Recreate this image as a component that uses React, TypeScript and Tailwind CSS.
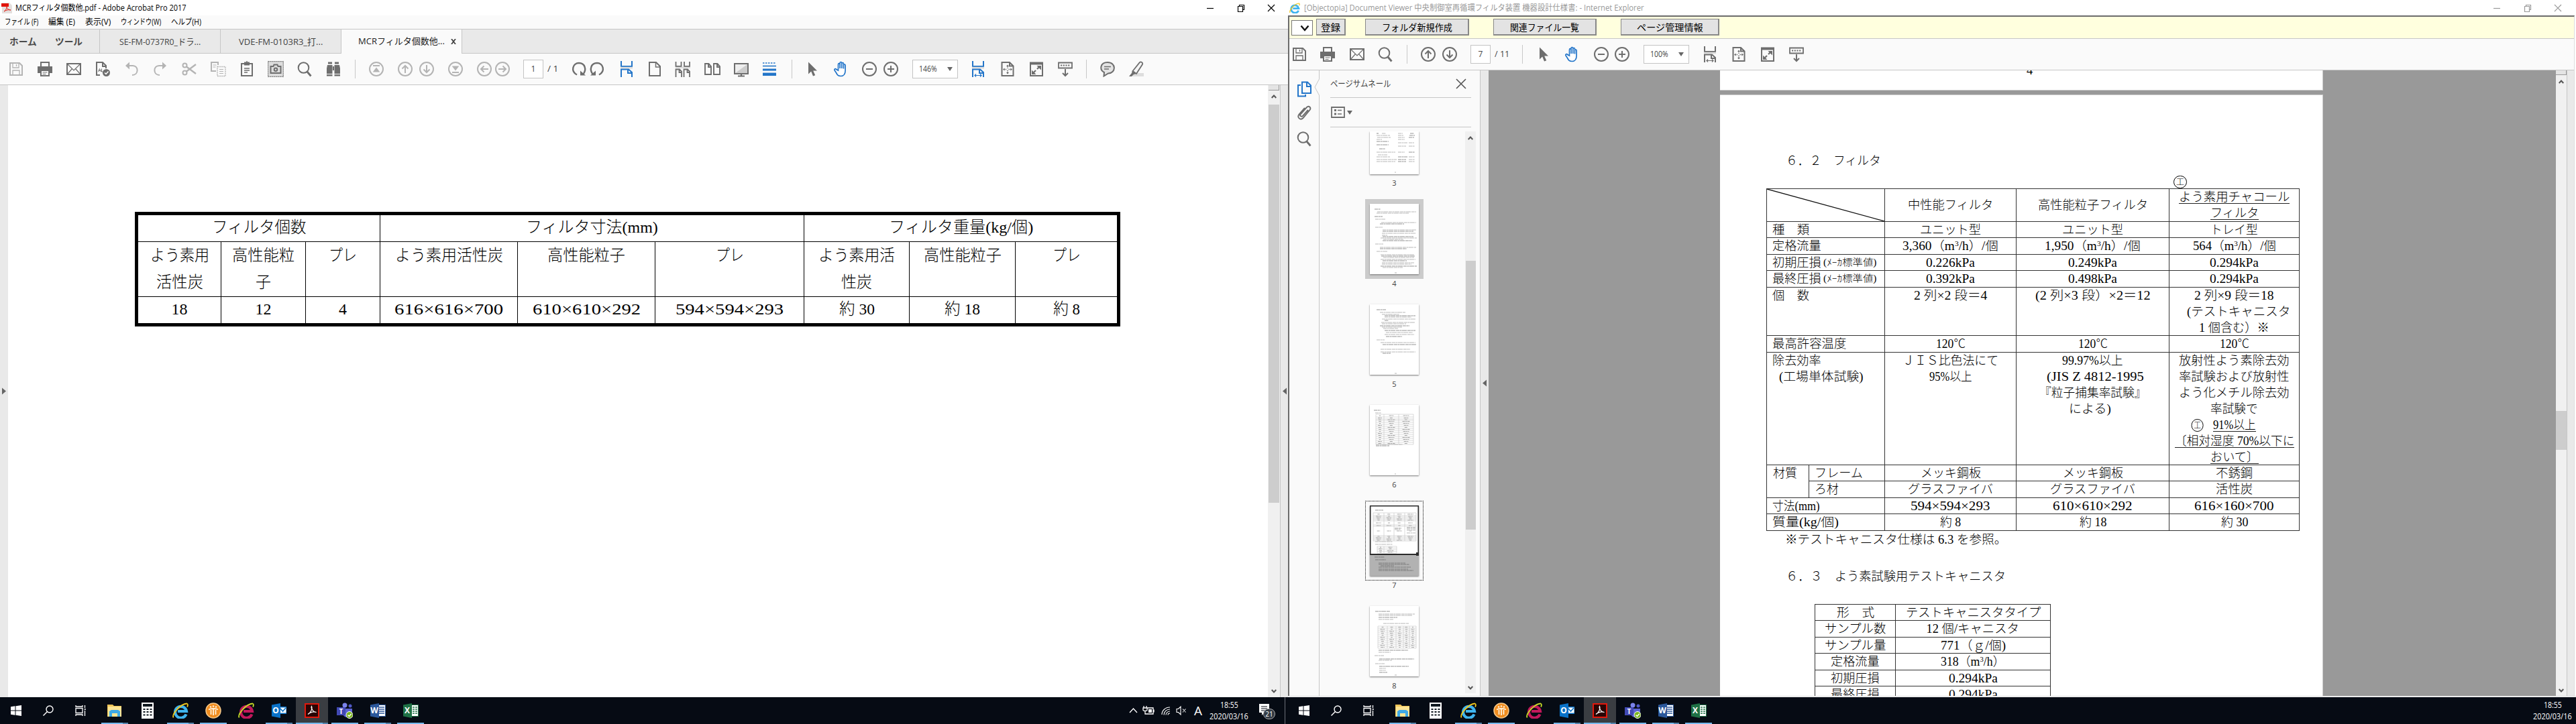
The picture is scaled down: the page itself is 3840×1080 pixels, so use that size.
import React, { useLayoutEffect, useRef, useState } from "react";

const UI = "font-['Open_Sans','Noto_Sans_CJK_JP',sans-serif]";
const DOC = "font-['Liberation_Serif','Noto_Sans_CJK_JP',serif] font-light";

/* Latin runs keep the regular weight while Japanese inherits the surrounding one. */
function mix(node: React.ReactNode): React.ReactNode {
  if (typeof node === "string") {
    return node.split(/([\x20-\x7e×]+)/).map((t, i) => (i % 2 ? <span key={i} className="font-normal">{t}</span> : t));
  }
  if (Array.isArray(node)) return node.map((n, i) => <React.Fragment key={i}>{mix(n)}</React.Fragment>);
  if (React.isValidElement<{ children?: React.ReactNode }>(node) && node.props.children) {
    return React.cloneElement(node, {}, mix(node.props.children));
  }
  return node;
}

/* Text condensed or widened to an exact pixel width. */
function Fit({ w, children, className = "" }: { w: number; children: React.ReactNode; className?: string }) {
  const ref = useRef<HTMLSpanElement>(null);
  const [s, setS] = useState(1);
  useLayoutEffect(() => {
    if (ref.current && ref.current.offsetWidth) setS(w / ref.current.offsetWidth);
  }, [w]);
  return (
    <span className={`block shrink-0 whitespace-nowrap ${className}`} style={{ width: w }}>
      <span ref={ref} className="inline-block origin-left whitespace-pre" style={{ transform: `scaleX(${s})` }}>
        {mix(children)}
      </span>
    </span>
  );
}

const G = "#6e6e6e";
const L = "#b4b4b4";
const B = "#2375c9";

type IP = { c?: string; className?: string };
function Svg({ children, c = G, className = "" }: IP & { children: React.ReactNode }) {
  return (
    <svg viewBox="0 0 24 24" fill="none" stroke={c} strokeWidth="2" className={`block h-6 w-6 shrink-0 ${className}`}>
      {children}
    </svg>
  );
}

const Save = (p: IP) => (
  <Svg {...p}>
    <path d="M3 3h14l4 4v14H3z" />
    <path d="M7 3v7h9V3M12.5 5v3M7 21v-7h10v7" strokeWidth="1.3" />
  </Svg>
);
const Print = (p: IP) => (
  <Svg {...p}>
    <path d="M6 8V2h12v6" />
    <path d="M1 8h22v10h-4v-4H5v4H1z" fill={p.c || G} stroke="none" />
    <path d="M6 14h12v8H6z" fill="#fff" />
    <path d="M8.5 17h7M8.5 19.5h5" strokeWidth="1.2" />
  </Svg>
);
const Mail = (p: IP) => (
  <Svg {...p}>
    <path d="M2 4h20v16H2z" />
    <path d="M2 4l10 10L22 4M2 20l7.5-8.500M22 20l-7.500-8.500" strokeWidth="1.2" />
  </Svg>
);
const Spell = (p: IP) => (
  <Svg {...p}>
    <path d="M8 21H3V2h9l5 5v4M12 2v6h5" />
    <path d="M5.500 16l2-4.500 2 4.500M6.300 14.500h2.500M10.500 11.500v4.500h2" strokeWidth="1" />
    <circle cx="17.500" cy="17.500" r="5.500" fill={G} stroke="none" />
    <path d="M15 17.500l2 2 3.500-4" stroke="#fff" strokeWidth="1.500" />
  </Svg>
);
const Undo = (p: IP) => (
  <Svg {...p}>
    <path d="M4 7h10c9 0 9 14-1 14" />
    <path d="M9 1.500v11L3 7z" fill={L} stroke="none" />
  </Svg>
);
const Redo = (p: IP) => (
  <Svg {...p}>
    <path d="M20 7H10c-9 0-9 14 1 14" />
    <path d="M15 1.500v11L21 7z" fill={L} stroke="none" />
  </Svg>
);
const Cut = (p: IP) => (
  <Svg {...p}>
    <circle cx="5.500" cy="6.500" r="3" />
    <circle cx="5.500" cy="17.500" r="3" />
    <path d="M8 8.500L22 19M8 15.500L22 5" strokeWidth="2.400" />
  </Svg>
);
const Copy = (p: IP) => (
  <Svg {...p}>
    <path d="M9 15H2V2h10v4" />
    <path d="M4.500 6h5M4.500 9h4" strokeWidth="1.200" />
    <path d="M11 8.500h12v14H11z" strokeWidth="1.400" strokeDasharray="2 1" />
    <path d="M14 12.500h6M14 15.500h6M14 18.500h6" strokeWidth="1.200" />
  </Svg>
);
const Paste = (p: IP) => (
  <Svg {...p}>
    <path d="M4 4h16v18H4z" />
    <path d="M8 1.500h8v5H8z" fill={G} stroke="none" />
    <path d="M12 0v3M8 11h8M8 14h8M8 17h5" strokeWidth="1.400" />
  </Svg>
);
const Camera = (p: IP) => (
  <Svg {...p}>
    <path d="M.700.700h22.600v22.600H.700z" fill="#ddd" strokeWidth="1.200" strokeDasharray="2 1" />
    <path d="M4.500 8h4l1-2.500h5l1 2.500h4v10h-15z" />
    <circle cx="12" cy="12.800" r="2.300" />
  </Svg>
);
const Search = (p: IP) => (
  <Svg {...p}>
    <circle cx="10.500" cy="10" r="7.800" />
    <path d="M15.500 15.500l6 7" strokeWidth="2.800" />
  </Svg>
);
const Binoc = (p: IP) => (
  <Svg {...p}>
    <path d="M4 1.500h6v3H4zM14 1.500h6v3h-6zM3 6h7.500v13H2v-8zM21 6h-7.500v13H22v-8zM2 20h8.500v2.500H2zM13.500 20H22v2.500h-8.500zM11 8h2v6h-2z" fill={G} stroke="none" />
  </Svg>
);
const Circ = ({ d, ...p }: IP & { d: string }) => (
  <Svg {...p}>
    <circle cx="12" cy="12" r="10" />
    <path d={d} strokeWidth="2" />
  </Svg>
);
const SolidCirc = ({ d, ...p }: IP & { d: string }) => (
  <Svg {...p}>
    <circle cx="12" cy="12" r="10" />
    <path d={d} strokeWidth="1.800" fill={p.c || G} />
  </Svg>
);
const UP = "M12 18V7M7.500 11.500L12 7l4.500 4.500";
const DOWN = "M12 6v11M7.500 12.500L12 17l4.500-4.500";
const LEFT = "M18 12H7M11.500 7.500L7 12l4.500 4.500";
const RIGHT = "M6 12h11M12.500 7.500L17 12l-4.500 4.500";
const FIRST = "M7 7h10M12 11l-3.500 4.500h7z";
const LAST = "M7 17h10M12 13L8.500 8.500h7z";
const Cw = (p: IP) => (
  <Svg {...p}>
    <path d="M9 20.500C-1 15 3 3 12 3s12 10 6 17" strokeWidth="2.400" />
    <path d="M14 14.500v7h8z" fill={G} stroke="none" />
  </Svg>
);
const Ccw = (p: IP) => (
  <Svg {...p}>
    <path d="M15 20.500C25 15 21 3 12 3S0 13 6 20" strokeWidth="2.400" />
    <path d="M10 14.500v7H2z" fill={G} stroke="none" />
  </Svg>
);
const Scroll = (p: IP) => (
  <Svg {...p}>
    <path d="M4 0v8h16V0" />
    <path d="M3 8.500h18v3H3z" fill="#ccc" fillOpacity=".6" stroke="none" />
    <path d="M4 24V12.500h11l5 4.500V24M14 12.500V18h6" />
  </Svg>
);
const FitW = (p: IP) => (
  <Svg {...p}>
    <path d="M4 0v8h16V0" />
    <path d="M3 8.500h18v3H3z" fill="#ccc" fillOpacity=".6" stroke="none" />
    <path d="M4 24V12.500h11l5 4.500V24M14 12.500V18h6" />
    <path d="M7 21.500h10M9 19.500l-2 2 2 2M15 19.500l2 2-2 2" strokeWidth="1.200" />
  </Svg>
);
const PageI = (p: IP) => (
  <Svg {...p}>
    <path d="M4 2h10l6 6v14H4z" />
    <path d="M13.500 2v7H20" strokeWidth="1.500" />
  </Svg>
);
const Four = (p: IP) => (
  <Svg {...p}>
    <path d="M1.500 1v7h8V1M14 1v7h8V1M1.500 24V12.500H7l3 3V24M13.500 24V12.500H19l3 3V24M6.500 12.500V17h3M18.500 12.500V17h3" strokeWidth="1.800" />
    <path d="M1 8.500h22v2.500H1z" fill="#ccc" fillOpacity=".6" stroke="none" />
  </Svg>
);
const Two = (p: IP) => (
  <Svg {...p}>
    <path d="M1 4h5.500L10 8v12H1zM14 4h5.500L23 8v12h-9zM6 4v5h4M19 4v5h4" strokeWidth="1.900" />
  </Svg>
);
const Monitor = (p: IP) => (
  <Svg {...p}>
    <path d="M2 4h20v15H2z" fill="#eee" />
    <path d="M3 18L21 5v13z" fill="#ccc" stroke="none" />
    <path d="M7 22.500h10M12 19v3" strokeWidth="2.200" />
  </Svg>
);
const Lines = (p: IP) => (
  <Svg {...p}>
    <path d="M2 3h20" strokeWidth="1.300" strokeDasharray="2.500 1.500" />
    <path d="M2 7.500h20" strokeWidth="1.600" />
    <path d="M2 13h20" strokeWidth="3" />
    <path d="M2 19.800h20" strokeWidth="4.500" />
  </Svg>
);
const Cursor = (p: IP) => (
  <Svg {...p}>
    <path d="M6 1.500v18l4.200-4 2.800 7 3.200-1.300-3-6.700H19z" fill={G} stroke="none" />
  </Svg>
);
const Hand = (p: IP) => (
  <Svg {...p}>
    <path d="M7.500 14V5.200c0-2 2.600-2 2.600 0V11 3c0-2 2.700-2 2.700 0v8V4c0-2 2.700-2 2.700 0v7.500V6.500c0-2 2.600-2 2.600 0V14c0 5-2 8.500-6.600 8.500-4.500 0-5.500-2-7-5L2 13.800c-.800-2 1.500-3 2.700-1.300z" fill="#fff" strokeWidth="1.700" />
  </Svg>
);
const FitPage = (p: IP) => (
  <Svg {...p}>
    <path d="M3.500 2H15l5.500 5.500V22h-17zM15 2v5.500h5.500" />
    <path d="M12 7.500v4M12 13.500v5M6.500 12.500h4M13.500 12.500h4" strokeWidth="1.400" strokeDasharray="1.400 .800" />
    <path d="M12 5.500l2 2.500h-4zM12 19.500l2-2.500h-4zM5 12.500l2.500-2v4zM19 12.500l-2.500-2v4z" fill={G} stroke="none" />
  </Svg>
);
const Full = (p: IP) => (
  <Svg {...p}>
    <path d="M3 3h18v19H3z" />
    <path d="M2 1.500h20v4H2z" fill={G} stroke="none" />
    <path d="M12.500 7H19v6.500zM5 13.500V20h6.500z" fill={G} stroke="none" />
    <path d="M13 12l4-4M7 18l4-4" strokeWidth="2.200" />
  </Svg>
);
const ReadMode = (p: IP) => (
  <Svg {...p}>
    <path d="M2 2.500h20v8H2z" strokeWidth="1.800" />
    <path d="M5 6.500h14" strokeWidth="2" strokeDasharray="2.200 1.500" />
    <path d="M12 12v10M8 18l4 4 4-4" strokeWidth="2" />
  </Svg>
);
const Comment = (p: IP) => (
  <Svg {...p}>
    <path d="M12 2c13 0 13 16 1 16.500L6.500 22.500l.500-5.500C-.500 13 1 2 12 2z" fill="#e4e4e4" />
    <path d="M7 8.500h10M7 12h7" strokeWidth="1.600" />
  </Svg>
);
const Marker = (p: IP) => (
  <Svg {...p}>
    <path d="M9 18h14v5H6z" fill="#ddd" stroke="none" />
    <path d="M6.500 15L17 2c2-1.500 5 .500 4 3L12 19z" fill="#f5f5f5" strokeWidth="1.800" />
    <path d="M6 14.500l6 4.500-4 1-3 3H1l4-5z" fill={G} stroke="none" />
  </Svg>
);
const Tri = ({ className = "" }: { className?: string }) => (
  <svg viewBox="0 0 8 6" className={`block h-1.5 w-2 shrink-0 ${className}`}><path d="M0 0h8L4 6z" fill="#666" /></svg>
);
const SideTri = ({ right }: { right?: boolean }) => (
  <svg viewBox="0 0 6 10" className="block h-[11px] w-1.5"><path d={right ? "M0 0l6 5-6 5z" : "M6 0L0 5l6 5z"} fill="#666" /></svg>
);
const Chev = ({ up }: { up?: boolean }) => (
  <svg viewBox="0 0 8 6" className="block h-1.5 w-2" fill="none" stroke="#555" strokeWidth="2"><path d={up ? "M.700 5L4 1.500 7.300 5" : "M.700 1L4 4.500 7.300 1"} /></svg>
);
const Sep = ({ className = "" }: { className?: string }) => <div className={`h-7 w-px shrink-0 bg-[#c8c8c8] ${className}`} />;

const WinCtl = ({ c, className }: { c: string; className: string }) => (
  <div className={`flex h-5 items-center ${className}`}>
    <svg viewBox="0 0 104 12" className="h-3 w-[104px]" fill="none" stroke={c} strokeWidth="1.200">
      <path d="M1 6.500h10" />
      <path d="M47.500 3.500h7v8h-7zM49.500 3.500V1.500h7v7h-2" />
      <path d="M92 1l10 10M102 1L92 11" />
    </svg>
  </div>
);

const Box = ({ w, children, className = "" }: { w: string; children: React.ReactNode; className?: string }) => (
  <div className={`flex h-7 shrink-0 items-center border border-[#c4c4c4] bg-white text-[12px] text-[#444] ${w} ${className}`}>{children}</div>
);

/* ---------- left window ---------- */
const bd = "border-black";
function LeftTable() {
  const mid: [string, [string, number][]][] = [
    ["w-[124px]", [["よう素用", 88], ["活性炭", 70]]],
    ["w-[126px]", [["高性能粒", 93], ["子", 23]]],
    ["w-[111px]", [["プレ", 42]]],
    ["w-[205px]", [["よう素用活性炭", 161]]],
    ["w-[205px]", [["高性能粒子", 116]]],
    ["w-[222px]", [["プレ", 42]]],
    ["w-[157px]", [["よう素用活", 114], ["性炭", 46]]],
    ["w-[158px]", [["高性能粒子", 116]]],
    ["flex-1", [["プレ", 42]]],
  ];
  const low: [string, string, number][] = [
    ["w-[124px]", "18", 24], ["w-[126px]", "12", 24], ["w-[111px]", "4", 12],
    ["w-[205px]", "616×616×700", 162], ["w-[205px]", "610×610×292", 161], ["w-[222px]", "594×594×293", 161],
    ["w-[157px]", "約 30", 53], ["w-[158px]", "約 18", 53], ["flex-1", "約 8", 40],
  ];
  return (
    <div className={`ml-[189px] mt-[189px] h-[171px] w-[1469px] border-[5px] ${bd} text-[24px] text-black ${DOC}`}>
      <div className={`flex h-10 border-b ${bd} leading-[36px]`}>
        <div className={`flex w-[361px] justify-center border-r ${bd}`}><Fit w={141}>フィルタ個数</Fit></div>
        <div className={`flex w-[632px] justify-center border-r ${bd}`}><Fit w={197}>フィルタ寸法(mm)</Fit></div>
        <div className="flex flex-1 justify-center"><Fit w={215}>フィルタ重量(kg/個)</Fit></div>
      </div>
      <div className={`flex h-[82px] border-b ${bd} leading-10`}>
        {mid.map(([w, lines], i) => (
          <div key={i} className={`flex flex-col items-center ${w} ${i < 8 ? "border-r " + bd : ""}`}>
            {lines.map(([t, n]) => <Fit key={t} w={n}>{t}</Fit>)}
          </div>
        ))}
      </div>
      <div className="flex h-[39px] leading-[37px]">
        {low.map(([w, t, n], i) => (
          <div key={i} className={`flex justify-center ${w} ${i < 8 ? "border-r " + bd : ""}`}><Fit w={n}>{t}</Fit></div>
        ))}
      </div>
    </div>
  );
}

function LeftWindow() {
  return (
    <div className={`flex h-[1040px] w-[1920px] flex-col bg-white ${UI}`}>
      <div className="flex h-[23px] items-center">
        <svg viewBox="0 0 16 16" className="ml-[2px] mr-[5px] h-4 w-4">
          <path d="M1 0h11l4 4v12H1z" fill="#e4e0de" />
          <path d="M0 1h11v5H0z" fill="#e1140a" />
          <path d="M4 13c3-2 5-6 4-8-1 2 2 6 6 6-3-1-7 0-10 2z" fill="none" stroke="#e1251b" />
        </svg>
        <Fit w={255} className="text-[12px] text-black">MCRフィルタ個数他.pdf - Adobe Acrobat Pro 2017</Fit>
        <WinCtl c="#000" className="ml-auto mr-[18px]" />
      </div>
      <div className="flex h-5 items-center bg-[#fafafa] pl-[7px] text-[12px] text-black">
        <Fit w={50}>ファイル (F)</Fit>
        <Fit w={40} className="ml-[15px]">編集 (E)</Fit>
        <Fit w={38} className="ml-[15px]">表示(V)</Fit>
        <Fit w={60} className="ml-[15px]">ウィンドウ(W)</Fit>
        <Fit w={45} className="ml-[15px]">ヘルプ(H)</Fit>
      </div>
      <div className="flex h-[37px] border-y border-[#c6c6c6] bg-[#e9e9e9] text-[13px] text-[#444]">
        <div className="flex w-[149px] items-center border-r border-[#c6c6c6] pl-[14px] text-[14px] font-bold text-[#4b4b4b]">
          <Fit w={41}>ホーム</Fit>
          <Fit w={41} className="ml-[27px]">ツール</Fit>
        </div>
        <div className="flex w-[180px] items-center border-r border-[#c6c6c6] pl-[29px] pt-0.5"><Fit w={121}>SE-FM-0737R0_ドラ...</Fit></div>
        <div className="flex w-[180px] items-center border-r border-[#c6c6c6] pl-[27px] pt-0.5"><Fit w={125}>VDE-FM-0103R3_打...</Fit></div>
        <div className="-mb-px flex w-[180px] items-center border-r border-[#c6c6c6] bg-[#fafafa] pl-[25px] text-[#222]">
          <Fit w={129}>MCRフィルタ個数他...</Fit>
          <svg viewBox="0 0 8 8" className="ml-[9px] h-2 w-2" stroke="#444" strokeWidth="1.800"><path d="M1 0l6 8M7 0L1 8" /></svg>
        </div>
      </div>
      <div className="flex h-[47px] items-center border-b border-[#c6c6c6] bg-[#fafafa]">
        <div className="ml-3 flex gap-[19px]">
          <Save c={L} /><Print /><Mail /><Spell /><Undo c={L} /><Redo c={L} /><Cut c={L} /><Copy c={L} /><Paste /><Camera /><Search /><Binoc />
        </div>
        <Sep className="ml-5" />
        <SolidCirc d={FIRST} c={L} className="ml-[19px]" />
        <Circ d={UP} c={L} className="ml-[19px]" />
        <Circ d={DOWN} c={L} className="ml-2" />
        <SolidCirc d={LAST} c={L} className="ml-[19px]" />
        <Circ d={LEFT} c={L} className="ml-[19px]" />
        <Circ d={RIGHT} c={L} className="ml-[3px]" />
        <Box w="w-[30px]" className="ml-[19px] justify-center">1</Box>
        <Fit w={16} className="ml-1.5 text-[12px] text-[#444]">/ 1</Fit>
        <Cw className="ml-[19px]" />
        <Ccw className="ml-[3px]" />
        <Scroll c={B} className="ml-5" />
        <PageI className="ml-[18px]" />
        <Four className="ml-[18px]" />
        <Two className="ml-5" />
        <Monitor className="ml-[19px]" />
        <Lines c={B} className="ml-[18px]" />
        <Sep className="ml-[21px]" />
        <Cursor className="ml-[18px]" />
        <Hand c={B} className="ml-[19px]" />
        <Circ d="M7 12h10" className="ml-[18px]" />
        <Circ d="M7 12h10M12 7v10" className="ml-2" />
        <Box w="w-[68px]" className="ml-5 pl-[9px]"><Fit w={27}>146%</Fit><Tri className="ml-[15px]" /></Box>
        <FitW c={B} className="ml-[18px]" />
        <FitPage className="ml-5" />
        <Full className="ml-[19px]" />
        <ReadMode className="ml-[19px]" />
        <Sep className="ml-[19px]" />
        <Comment className="ml-[19px]" />
        <Marker className="ml-[19px]" />
      </div>
      <div className="flex min-h-0 flex-1">
        <div className="flex w-3 items-center justify-center bg-[#e9e9e9]"><SideTri right /></div>
        <div className="flex-1"><LeftTable /></div>
        <div className="flex w-[18px] flex-col items-center bg-[#f0f0f0]">
          <div className="h-2 w-4 border-b border-r border-[#999] bg-[#e4e4e4]" />
          <div className="mt-1.5"><Chev up /></div>
          <div className="mt-[9px] h-[594px] w-4 bg-[#cdcdcd]" />
          <div className="mb-1.5 mt-auto"><Chev /></div>
        </div>
        <div className="flex w-3 items-center justify-center border-l border-[#c6c6c6] bg-[#e9e9e9]"><SideTri /></div>
      </div>
    </div>
  );
}

/* ---------- page thumbnails ---------- */
type Ln = [number, number, number];
const thumbText: Record<string, Ln[]> = {
  "4": [[7, 8, 9], [11, 12, 58], [10, 14, 48], [7, 19, 12], [8, 23, 15], [17, 28, 52], [15, 30, 36], [8, 35, 11], [19, 39, 50], [19, 41, 46], [18, 44, 51], [18, 47, 8], [19, 49, 46], [16, 51, 54], [20, 53, 30], [19, 55, 44], [8, 60, 12], [15, 65, 54], [15, 67, 40], [10, 71, 16], [16, 76, 50], [17, 78, 50], [20, 80, 46], [16, 83, 52], [19, 85, 36], [18, 88, 48], [18, 90, 44], [16, 93, 54], [19, 95, 30], [37, 103, 3]],
  "5": [[10, 8, 14], [15, 12, 38], [18, 15, 26], [22, 17, 46], [22, 19, 40], [18, 22, 50], [22, 24, 6], [17, 27, 50], [18, 29, 36], [15, 32, 44], [18, 34, 30], [20, 36, 22], [22, 39, 46], [24, 42, 40], [22, 45, 44], [24, 48, 24], [10, 53, 12], [16, 57, 52], [19, 60, 50], [16, 67, 44], [16, 71, 52], [19, 73, 12], [37, 103, 3]],
  "8": [[8, 8, 22], [13, 12, 54], [13, 14, 50], [13, 17, 28], [13, 20, 22], [20, 26, 38], [13, 66, 44], [13, 69, 18], [7, 74, 14], [14, 79, 52], [13, 81, 20], [8, 86, 14], [14, 90, 44], [14, 93, 10], [14, 96, 10], [14, 99, 12], [37, 103, 3]],
  "3": [[10, 3, 3], [18, 3, 6], [42, 3, 7], [60, 3, 6], [10, 6, 20], [42, 6, 8], [59, 6, 8], [11, 9, 20], [42, 9, 10], [58, 9, 8], [10, 12, 8], [42, 12, 10], [10, 15, 18], [42, 17, 14], [58, 17, 8], [10, 20, 18], [42, 22, 12], [58, 22, 9], [14, 26, 9], [10, 31, 28], [42, 31, 10], [58, 31, 9], [12, 35, 14], [10, 38, 20], [42, 38, 14], [58, 38, 9], [10, 42, 30], [42, 42, 12], [58, 42, 9], [10, 45, 28], [42, 45, 12], [58, 45, 9], [37, 61, 2]],
};
function Thumb({ n }: { n: string }) {
  const tl = (ls: Ln[]) => ls.map(([x, y, w], i) => (
    <path key={i} d={`M${x} ${y}h${w}`} stroke={i % 3 ? "#b8b8b8" : "#949494"} strokeWidth="1.100" strokeDasharray="5 .6 3 .5 7 .8" />
  ));
  const grid = (x: number, y: number, cols: number[], rows: number[]) => {
    const W = cols[cols.length - 1], H = rows[rows.length - 1];
    return (
      <g>
        <path d={cols.map(c => `M${x + c} ${y}v${H}`).join("") + rows.map(r => `M${x} ${y + r}h${W}`).join("")} stroke="#c4c4c4" strokeWidth=".6" />
        {rows.slice(1).map((r, i) => cols.slice(1).map((c, j) => {
          const k = 0.2 + ((i * 3 + j * 5) % 4) * 0.1;
          return <path key={`${i}-${j}`} d={`M${x + (cols[j] + c) / 2 - ((c - cols[j]) * k) / 2} ${y + (rows[i] + r) / 2}h${(c - cols[j]) * k}`} stroke="#aaa" strokeWidth="1" strokeDasharray="4 .6 2 .6" />;
        }))}
      </g>
    );
  };
  return (
    <svg viewBox={n === "3" ? "0 0 73 64" : "0 0 73 105"} className={`block w-[73px] bg-white shadow-[0_1px_2px_#777] ${n === "3" ? "h-16" : "h-[105px]"}`} fill="none">
      {n === "7" && <path d="M0 74h73v31H0z" fill="#b2b2b2" />}
      {thumbText[n] && tl(thumbText[n])}
      {n === "6" && <>{tl([[6, 8, 10], [8, 12, 9], [9, 59, 40], [9, 61, 20], [37, 103, 2]])}{grid(9, 14, [0, 12, 34, 56], [0, 4, 7, 9, 12, 15, 18, 21, 24, 27, 30, 33, 36, 39, 42, 45])}</>}
      {n === "8" && grid(12, 30, [0, 14, 27, 38, 47, 57], [0, 3, 6, 9, 12, 15, 18, 21, 24, 27, 30, 33])}
      {n === "7" && <>
        {tl([[8, 7, 12], [8, 54, 26], [8, 58, 26]])}
        {grid(5, 11, [0, 16, 31, 47, 64], [0, 4, 6, 8, 10, 12, 18, 20, 34, 36, 38, 40, 42])}
        {tl([[55, 33, 13], [55, 35, 13], [55, 37, 13], [37, 34, 10], [37, 36, 9], [55, 41, 13]])}
        {grid(11, 61, [0, 10, 29], [0, 2.5, 5, 7.5, 10])}
        {[[7, 77, 15], [8, 81, 16], [13, 86, 40], [13, 88, 46], [16, 90, 20], [13, 92, 48], [13, 95, 44], [13, 97, 52]].map(([x, y, w], i) => <path key={i} d={`M${x} ${y}h${w}`} stroke="#7a7a7a" strokeWidth="1" strokeDasharray="5 .600 3 .5" />)}
        <path d="M.500.500h72v72.500H.500z" stroke="#2b2b2b" strokeWidth="2" />
        <path d="M69 70h4v5h-4z" fill="#2b2b2b" />
      </>}
    </svg>
  );
}

/* ---------- right document ---------- */
const ln = "border-[#333]";
type Item = [React.ReactNode, number, string?];
function Cell({ w, items, left, mid }: { w: string; items: Item[]; left?: boolean; mid?: boolean }) {
  return (
    <div className={`flex flex-col border-b border-r ${ln} ${w} ${left ? "items-start pl-2" : "items-center"} ${mid ? "justify-center" : ""}`}>
      {items.map(([t, n, k], i) => <Fit key={i} w={n} className={k || ""}>{t}</Fit>)}
    </div>
  );
}
const C1 = "w-[176px]", C2 = "w-[196px]", C3 = "w-[228px]", C4 = "w-[194px]";
const ul = "h-[22px] mb-[2px] border-b border-[#222]";
const M3 = <span>m<sup className="relative -top-1.5 align-baseline text-[11px] leading-none">3</sup>/h</span>;

function Row({ h, a, b, c, d, mid }: { h: string; a: React.ReactNode; b: Item[]; c: Item[]; d: Item[]; mid?: boolean }) {
  return (
    <div className={`flex ${h}`}>
      {a}
      <Cell w={C2} items={b} mid={mid} /><Cell w={C3} items={c} mid={mid} /><Cell w={C4} items={d} />
    </div>
  );
}
const Head = ({ items }: { items: Item[] }) => <Cell w={C1} items={items} left />;
const Maker = ({ t }: { t: string }) => (
  <div className={`flex border-b border-r ${ln} ${C1} pl-2`}>
    <Fit w={73}>{t}</Fit><Fit w={79} className="ml-[3px] text-[14px]">(ﾒｰｶ標準値)</Fit>
  </div>
);
const Mark = ({ className = "" }: { className?: string }) => (
  <div className={`flex h-[19px] w-5 items-center justify-center rounded-full border border-black text-[12px] leading-none ${className}`}>工</div>
);

function RightDoc() {
  const small: [React.ReactNode, number, React.ReactNode, number][] = [
    ["形　式", 56, "テストキャニスタタイプ", 201],
    ["サンプル数", 91, "12 個/キャニスタ", 139],
    ["サンプル量", 91, "771（ｇ/個)", 97],
    ["定格流量", 73, <span>318（{M3}）</span>, 96],
    ["初期圧損", 73, "0.294kPa", 73],
    ["最終圧損", 73, "0.294kPa", 73],
  ];
  return (
    <div className={`flex w-[899px] flex-col text-[18.4px] leading-6 text-black ${DOC}`}>
      <div className="flex h-[30px] shrink-0 justify-center overflow-hidden border-b border-r border-[#ccc] bg-white pl-[25px]">
        <span className="-mt-[12px] font-normal">4</span>
      </div>
      <div className="mt-1.5 min-h-0 flex-1 overflow-hidden border-r border-t border-[#ccc] bg-white">
        <Fit w={142} className="ml-[98px] mt-[86px]">６．２　フィルタ</Fit>
        <div className="flex h-[29px] items-end pl-[676px]"><Mark /></div>
        <div className={`ml-[69px] w-[795px] border-l border-t ${ln}`}>
          <Row h="h-[49px]" mid
            a={<svg viewBox="0 0 176 49" preserveAspectRatio="none" className={`h-[49px] shrink-0 border-b border-r ${ln} ${C1}`} stroke="#111" strokeWidth="1.300"><path d="M0 0l176 49" /></svg>}
            b={[["中性能フィルタ", 127]]} c={[["高性能粒子フィルタ", 164]]}
            d={[["よう素用チャコール", 165, ul], ["フィルタ", 72, ul]]} />
          <Row h="h-6" a={<Head items={[["種　類", 55]]} />} b={[["ユニット型", 91]]} c={[["ユニット型", 91]]} d={[["トレイ型", 71]]} />
          <Row h="h-[25px]" a={<Head items={[["定格流量", 73]]} />} b={[[<span>3,360（{M3}）/個</span>, 143]]} c={[[<span>1,950（{M3}）/個</span>, 143]]} d={[[<span>564（{M3}）/個</span>, 124]]} />
          <Row h="h-6" a={<Maker t="初期圧損" />} b={[["0.226kPa", 73]]} c={[["0.249kPa", 73]]} d={[["0.294kPa", 73]]} />
          <Row h="h-[25px]" a={<Maker t="最終圧損" />} b={[["0.392kPa", 73]]} c={[["0.498kPa", 73]]} d={[["0.294kPa", 73]]} />
          <Row h="h-[72px]" a={<Head items={[["個　数", 55]]} />} b={[["2 列×2 段＝4", 109]]} c={[["(2 列×3 段）×2＝12", 172]]}
            d={[["2 列×9 段＝18", 119], ["(テストキャニスタ", 154, "ml-3"], ["1 個含む）※", 105]]} />
          <Row h="h-[25px]" a={<Head items={[["最高許容温度", 110]]} />} b={[["120℃", 44]]} c={[["120℃", 44]]} d={[["120℃", 44]]} />
          <Row h="h-[168px]" a={<Head items={[["除去効率", 73], ["(工場単体試験)", 126, "ml-[10px]"]]} />}
            b={[["ＪＩＳ比色法にて", 143], ["95%以上", 64]]}
            c={[["99.97%以上", 91], ["(JIS Z 4812-1995", 145, "ml-2"], ["『粒子捕集率試験』", 160], ["による)", 63, "mr-2"]]}
            d={[["放射性よう素除去効", 165], ["率試験および放射性", 165], ["よう化メチル除去効", 165], ["率試験で", 71],
              [<span className="relative">91%以上<span className="absolute -left-9 top-[1px]"><Mark /></span></span>, 64, ul], ["〔相対湿度 70%以下に", 178, ul], ["おいて〕", 72, ul]]} />
          <div className="flex h-[49px]">
            <div className={`w-[63px] border-b border-r ${ln} pl-[9px]`}><Fit w={36}>材質</Fit></div>
            <div>
              <div className="flex h-6"><div className={`w-[113px] border-b border-r ${ln} pl-2`}><Fit w={72}>フレーム</Fit></div>
                <Cell w={C2} items={[["メッキ鋼板", 90]]} /><Cell w={C3} items={[["メッキ鋼板", 90]]} /><Cell w={C4} items={[["不銹鋼", 55]]} /></div>
              <div className="flex h-[25px]"><div className={`w-[113px] border-b border-r ${ln} pl-2`}><Fit w={36}>ろ材</Fit></div>
                <Cell w={C2} items={[["グラスファイバ", 127]]} /><Cell w={C3} items={[["グラスファイバ", 127]]} /><Cell w={C4} items={[["活性炭", 55]]} /></div>
            </div>
          </div>
          <Row h="h-6" a={<Head items={[["寸法(mm)", 71]]} />} b={[["594×594×293", 119]]} c={[["610×610×292", 119]]} d={[["616×160×700", 119]]} />
          <Row h="h-[25px]" a={<Head items={[["質量(kg/個)", 99]]} />} b={[["約 8", 31]]} c={[["約 18", 40]]} d={[["約 30", 40]]} />
        </div>
        <Fit w={330} className="ml-[97px] mt-px">※テストキャニスタ仕様は 6.3 を参照。</Fit>
        <Fit w={328} className="ml-[98px] mt-[31px]">６．３　よう素試験用テストキャニスタ</Fit>
        <div className={`ml-[141px] mt-[29px] w-[352px] border-l border-t ${ln}`}>
          {small.map(([a, aw, b, bw], i) => (
            <div key={i} className={`flex ${i % 2 ? "h-[25px]" : "h-[24px]"}`}>
              <Cell w="w-[120px]" items={[[a, aw]]} /><Cell w="w-[231px]" items={[[b, bw]]} />
            </div>
          ))}
        </div>
      </div>
    </div>
  );
}

const btn = "flex items-center justify-center border border-[#888] border-b-2 border-r-2 bg-[#e3e3e3] text-[14px] text-black h-[25px]";

function IE({ bg }: { bg?: string }) {
  return (
    <svg viewBox="0 0 24 24" className="h-full w-full" fill="none">
      <path d="M20.500 17.500A8.500 8.500 0 1 1 21 13H8" stroke={bg || "#3fb4ee"} strokeWidth="4.200" />
      <path d="M1.500 22.500C-1 17 12 2 21.500 1.500c2 .500 1.500 3 .500 5" stroke={bg ? "#c8dc28" : "#f2c81c"} strokeWidth="1.800" />
    </svg>
  );
}

function RightWindow() {
  return (
    <div className={`flex h-[1040px] w-[1920px] flex-col bg-white ${UI}`}>
      <div className="flex h-[23px] items-center">
        <div className="ml-[2px] mr-[6px] h-4 w-4"><IE /></div>
        <Fit w={507} className="text-[12px] text-[#999]">[Objectopia] Document Viewer 中央制御室再循環フィルタ装置 機器設計仕様書: - Internet Explorer</Fit>
        <WinCtl c="#999" className="ml-auto mr-[20px]" />
      </div>
      <div className="mr-0.5 flex h-[1015px] flex-col border-l-2 border-t-2 border-[#6b6b6b] border-r border-r-[#ddd]">
        <div className="flex h-[33px] shrink-0 items-start border-b border-[#c6c6c6] bg-[#ffffde] pl-[3px] pt-[3px]">
          <div className="mt-[2px] flex h-[23px] w-[32px] items-center justify-end border border-[#777] bg-white pr-[4px]">
            <svg viewBox="0 0 14 10" className="h-2.5 w-3.5" fill="none" stroke="#111" strokeWidth="2.400"><path d="M1.500 1.500L7 8l5.500-6.500" /></svg>
          </div>
          <div className={`${btn} ml-[5px] w-[44px]`}><Fit w={29}>登録</Fit></div>
          <div className={`${btn} ml-[29px] w-[155px]`}><Fit w={105}>フォルダ新規作成</Fit></div>
          <div className={`${btn} ml-[36px] w-[154px]`}><Fit w={103}>関連ファイル一覧</Fit></div>
          <div className={`${btn} ml-[36px] w-[147px]`}><Fit w={99}>ページ管理情報</Fit></div>
        </div>
        <div className="flex h-[47px] shrink-0 items-center border-b border-[#c6c6c6] bg-[#fafafa]">
          <Save className="ml-[3px]" /><Print className="ml-[18px]" /><Mail className="ml-5" /><Search className="ml-[18px]" />
          <Sep className="ml-5" />
          <Circ d={UP} className="ml-[19px]" /><Circ d={DOWN} className="ml-2" />
          <Box w="w-[30px]" className="ml-[19px] justify-center">7</Box>
          <Fit w={22} className="ml-1.5 text-[12px] text-[#444]">/ 11</Fit>
          <Sep className="ml-[19px]" />
          <Cursor className="ml-[19px]" /><Hand c={B} className="ml-[19px]" />
          <Circ d="M7 12h10" className="ml-[19px]" /><Circ d="M7 12h10M12 7v10" className="ml-[7px]" />
          <Box w="w-[68px]" className="ml-5 pl-[9px]"><Fit w={27}>100%</Fit><Tri className="ml-[15px]" /></Box>
          <FitW className="ml-[19px]" /><FitPage className="ml-[19px]" /><Full className="ml-[19px]" /><ReadMode className="ml-[19px]" />
        </div>
        <div className="flex min-h-0 flex-1">
          <div className="relative flex w-[45px] flex-col items-center border-r border-[#c6c6c6] bg-[#fafafa]">
            <Svg c={B} className="mt-4"><path d="M9 1.500h8l5 5V18H9zM16 1.500V8h6" /><path d="M7 6H3v16.500h11V20" /></Svg>
            <Svg className="mt-[11px]" c={G}><path d="M18 8l-8 9c-2 2-5-.500-3.500-2.500L16 4c3-3 7 .500 4.500 4L10.500 20c-4 4-9.500-.500-6-5.500L13 5" strokeWidth="1.900" /></Svg>
            <Search className="mt-[15px]" />
            <svg viewBox="0 0 8 26" className="absolute -right-px top-3 h-[26px] w-2" fill="#fafafa"><path d="M8 0L1 13l7 13" stroke="#c6c6c6" /></svg>
          </div>
          <div className="flex w-[239px] flex-col bg-[#fafafa]">
            <div className="ml-4 mr-[13px] flex h-[41px] shrink-0 items-center justify-between border-b border-[#c6c6c6] pr-[7px]">
              <Fit w={90} className="text-[13px] text-[#444]">ページサムネール</Fit>
              <svg viewBox="0 0 16 16" className="h-4 w-4" stroke="#555" strokeWidth="1.600"><path d="M1 1l14 14M15 1L1 15" /></svg>
            </div>
            <div className="ml-4 mr-[13px] flex h-11 shrink-0 items-center border-b border-[#c6c6c6] pl-px">
              <svg viewBox="0 0 21 17" className="h-[17px] w-[21px]" fill="none" stroke={G} strokeWidth="1.800"><path d="M1 1h19v15H1z" /><path d="M5 5.500h3M5 11h3" strokeWidth="3" /><path d="M10 5.500h6M10 11h6" strokeWidth="1.400" /></svg>
              <Tri className="ml-[3px]" />
            </div>
            <div className="mt-[6px] flex min-h-0 flex-1 pb-1">
              <div className="flex flex-1 flex-col items-center overflow-hidden pl-[6px] text-[11px] text-[#444]">
                <Thumb n="3" />
                <div className="mt-[5px] h-4 shrink-0">3</div>
                {["4", "5", "6", "7", "8"].map((n, i) => (
                  <div key={n} className={`flex shrink-0 flex-col items-center ${i === 0 ? "mt-[16px]" : "mt-[14px]"}`}>
                    <div className={`w-[87px] border p-[6px] ${n === "4" ? "border-[#cbcbcb] bg-[#cbcbcb]" : n === "7" ? "border-dotted border-black" : "border-transparent"}`}><Thumb n={n} /></div>
                    <div className="-mt-px h-[18px]">{n}</div>
                  </div>
                ))}
              </div>
              <div className="mr-[6px] flex w-4 flex-col items-center bg-[#f0f0f0] pt-[7px]">
                <Chev up />
                <div className="mt-[180px] h-[401px] w-[15px] bg-[#cdcdcd]" />
                <div className="mb-[5px] mt-auto"><Chev /></div>
              </div>
            </div>
          </div>
          <div className="flex w-[13px] items-center justify-center border-l border-[#c6c6c6] bg-[#e9e9e9]"><SideTri /></div>
          <div className="flex min-w-0 flex-1 bg-[#999] pl-[345px]"><RightDoc /></div>
          <div className="flex w-[17px] flex-col items-center border-r border-[#c6c6c6] bg-[#f0f0f0]">
            <div className="h-[7px] w-4 border-b border-r border-[#999] bg-[#e4e4e4]" />
            <div className="mt-[7px]"><Chev up /></div>
            <div className="mt-[488px] h-[58px] w-4 bg-[#cdcdcd]" />
            <div className="mb-[5px] mt-auto"><Chev /></div>
          </div>
          <div className="w-2.5 bg-[#e9e9e9]" />
        </div>
      </div>
      <div className="h-px bg-[#ddd]" />
    </div>
  );
}

/* ---------- taskbar ---------- */
const Office = ({ c, t, kind }: { c: string; t: string; kind: "doc" | "grid" | "mail" }) => (
  <div className="relative h-6 w-6">
    <svg viewBox="0 0 24 24" className="h-6 w-6">
      {kind === "mail" ? <><path d="M12 6h11v11H12z" fill={c} /><path d="M13.500 7.500h9v8h-9z" fill="#fff" /><path d="M14 9l3.500 4L22 8" fill="none" stroke={c} strokeWidth="1.500" /></>
        : <><path d="M12 3.500h11.500v17H12z" fill="#fff" stroke={c} /><path d={kind === "doc" ? "M14 7h8M14 10h8M14 13h8M14 16h8" : "M15 7h3M19 7h3M15 10h3M19 10h3M15 13h3M19 13h3M15 16h3M19 16h3"} stroke={c} strokeWidth="1.500" /></>}
      <path d="M1 3.500L14 1v22L1 20.500z" fill={c} />
    </svg>
    <span className="absolute left-0 top-0 w-[14px] text-center text-[12px] font-bold leading-6 text-white">{t}</span>
  </div>
);
function Slot({ children, bar, stack, active }: { children: React.ReactNode; bar?: boolean; stack?: boolean; active?: boolean }) {
  return (
    <div className={`relative flex h-10 w-12 items-center justify-center ${active ? "bg-[#3a3d42]" : ""}`}>
      <div className="flex h-6 w-6 items-center justify-center">{children}</div>
      {bar && <div className={`absolute bottom-0 flex h-0.5 ${active ? "left-0 w-12" : "left-1 w-10"}`}><div className="flex-1 bg-[#76b9ed]" />{stack && <div className="w-2 bg-[#5283ab]" />}</div>}
    </div>
  );
}
function Taskbar({ tray }: { tray?: boolean }) {
  return (
    <div className={`flex h-10 w-[1920px] items-center bg-[#060b14] text-white ${UI}`}>
      <Slot><svg viewBox="0 0 16 16" className="h-4 w-4" fill="#fff"><path d="M0 2.200l6.500-.900v6.200H0zM7.500 1.200L16 0v7.500H7.500zM0 8.500h6.500v6.200L0 13.800zM7.500 8.500H16V16l-8.500-1.200z" /></svg></Slot>
      <Slot><svg viewBox="0 0 16 16" className="h-4 w-4" fill="none" stroke="#fff" strokeWidth="1.400"><circle cx="10" cy="6" r="5" /><path d="M6.500 9.500L.500 15.500" /></svg></Slot>
      <Slot><svg viewBox="0 0 17 16" className="h-4 w-[17px]" fill="none" stroke="#fff" strokeWidth="1.300"><path d="M1 4.500h10v7H1zM1 0v2h10V0M1 16v-2h10v2M14.500 0v4M14.500 8v8M13.500 6h2.500" /></svg></Slot>
      <div className="ml-[3px] flex gap-px">
        <Slot bar stack><svg viewBox="0 0 24 24" className="h-6 w-6"><path d="M1 3h8l2 2h11v16H1z" fill="#f0c558" /><path d="M2 6h20v15H2z" fill="#ffe594" /><path d="M4 21v-8l3-2h10l3 2v8h-4v-5H8v5z" fill="#3fa9e6" /></svg></Slot>
        <Slot><svg viewBox="0 0 24 24" className="h-6 w-6"><path d="M3 0h18v24H3z" fill="#fff" /><path d="M5 2h14v4H5zM5.500 9h3v2h-3zM10.500 9h3v2h-3zM15.500 9h3v2h-3zM5.500 13h3v2h-3zM10.500 13h3v2h-3zM15.500 13h3v2h-3zM5.500 17.500h3v2h-3zM10.500 17.500h3v2h-3zM15.500 17.500h3v2h-3z" fill="#101820" /></svg></Slot>
        <Slot bar stack><IE /></Slot>
        <Slot bar><svg viewBox="0 0 24 24" className="h-6 w-6" fill="none"><circle cx="12" cy="12" r="11" fill="#f08c1e" stroke="#f6c98a" strokeWidth="1.500" /><path d="M5 10.500c3-2 11-2 14 0M8.500 11v7M12 10v9M15.500 11v7" stroke="#fff0d8" strokeWidth="1.800" /><circle cx="8" cy="6.500" r="1.300" fill="#fff0d8" /><circle cx="12" cy="5.500" r="1.300" fill="#fff0d8" /><circle cx="16" cy="6.500" r="1.300" fill="#fff0d8" /></svg></Slot>
        <Slot><IE bg="#c2185b" /></Slot>
        <Slot bar stack><Office c="#0a72c8" t="O" kind="mail" /></Slot>
        <Slot bar stack active><svg viewBox="0 0 24 24" className="h-6 w-6" fill="none"><path d="M2 2h20v20H2z" fill="#2a0505" stroke="#e2180c" strokeWidth="2" /><path d="M6 17.500c5-3 7-9 5.500-12-1.500 2 2 9 7 9-3-1.500-9-.500-12.500 3z" stroke="#fff" strokeWidth="1.200" /></svg></Slot>
        <Slot bar><div className="relative h-6 w-6"><svg viewBox="0 0 24 24" className="h-6 w-6"><circle cx="12" cy="4" r="3.500" fill="#7b83eb" /><circle cx="20" cy="5" r="2.500" fill="#5059c9" /><path d="M9 9h14v7c0 8-14 8-14 0z" fill="#5b63d3" /><path d="M0 7h13v12H0z" fill="#4149b5" /><circle cx="19" cy="18.500" r="5" fill="#7ab51d" stroke="#fff" /><path d="M16.500 18.500l2 2 3.200-3.700" fill="none" stroke="#fff" strokeWidth="1.500" /></svg><span className="absolute left-0 top-[7px] w-[13px] text-center text-[10px] font-bold leading-3">T</span></div></Slot>
        <Slot bar stack><Office c="#2b579a" t="W" kind="doc" /></Slot>
        <Slot bar><Office c="#1e7145" t="X" kind="grid" /></Slot>
      </div>
      <div className={`ml-auto flex items-center ${tray ? "" : "pr-[4px]"}`}>
        {tray && <>
          <svg viewBox="0 0 92 16" className="mr-1 h-4 w-[92px]" fill="none" stroke="#fff" strokeWidth="1.300">
            <path d="M5 11l5.500-6 5.500 6" />
            <path d="M29 4h11v9H30M41 6.500v4M26 1v3M30 1v3M25 4h6v3c0 2-6 2-6 0zM28 9v4h4" />
            <path d="M33 6h5v5h-5z" fill="#fff" stroke="none" />
            <path d="M53 14c0-6 5-11 12-11M56 14.500c0-5 4-8.500 9-8.500M59 14.500c0-3 3-5.500 6-5.500M62 14.500c0-1.500 1-2.500 3-2.500" strokeWidth="1.100" />
            <path d="M75 5.500h2.500L81 2v12l-3.500-3.500H75zM84 5.500l4.500 5M88.500 5.500l-4.500 5" strokeWidth="1.100" />
          </svg>
          <span className="w-[22px] text-center text-[19px]">A</span>
        </>}
        <div className={`flex w-[62px] flex-col items-center text-[12px] leading-[17px] ${tray ? "ml-1" : ""}`}>
          <Fit w={27}>18:55</Fit><Fit w={58}>2020/03/16</Fit>
        </div>
        {tray && <>
          <div className="relative ml-[14px] h-6 w-6">
            <svg viewBox="0 0 24 24" className="h-6 w-6"><path d="M0 2h15v13H8l-4 4v-4H0z" fill="#fff" /><path d="M3 6h9M3 9h9M3 12h6" stroke="#060b14" strokeWidth="1.200" /></svg>
            <span className="absolute left-[6px] top-[9px] flex h-4 w-[18px] items-center justify-center rounded-full border border-[#aaa] bg-[#333a44] text-[10px] leading-none">21</span>
          </div>
          <div className="ml-[14px] mr-1 h-10 w-px bg-[#6c7078]" />
        </>}
      </div>
    </div>
  );
}

export default function App() {
  return (
    <div className="h-[1080px] w-[3840px] overflow-hidden bg-white">
      <div className="flex"><LeftWindow /><RightWindow /></div>
      <div className="flex"><Taskbar tray /><Taskbar /></div>
    </div>
  );
}
